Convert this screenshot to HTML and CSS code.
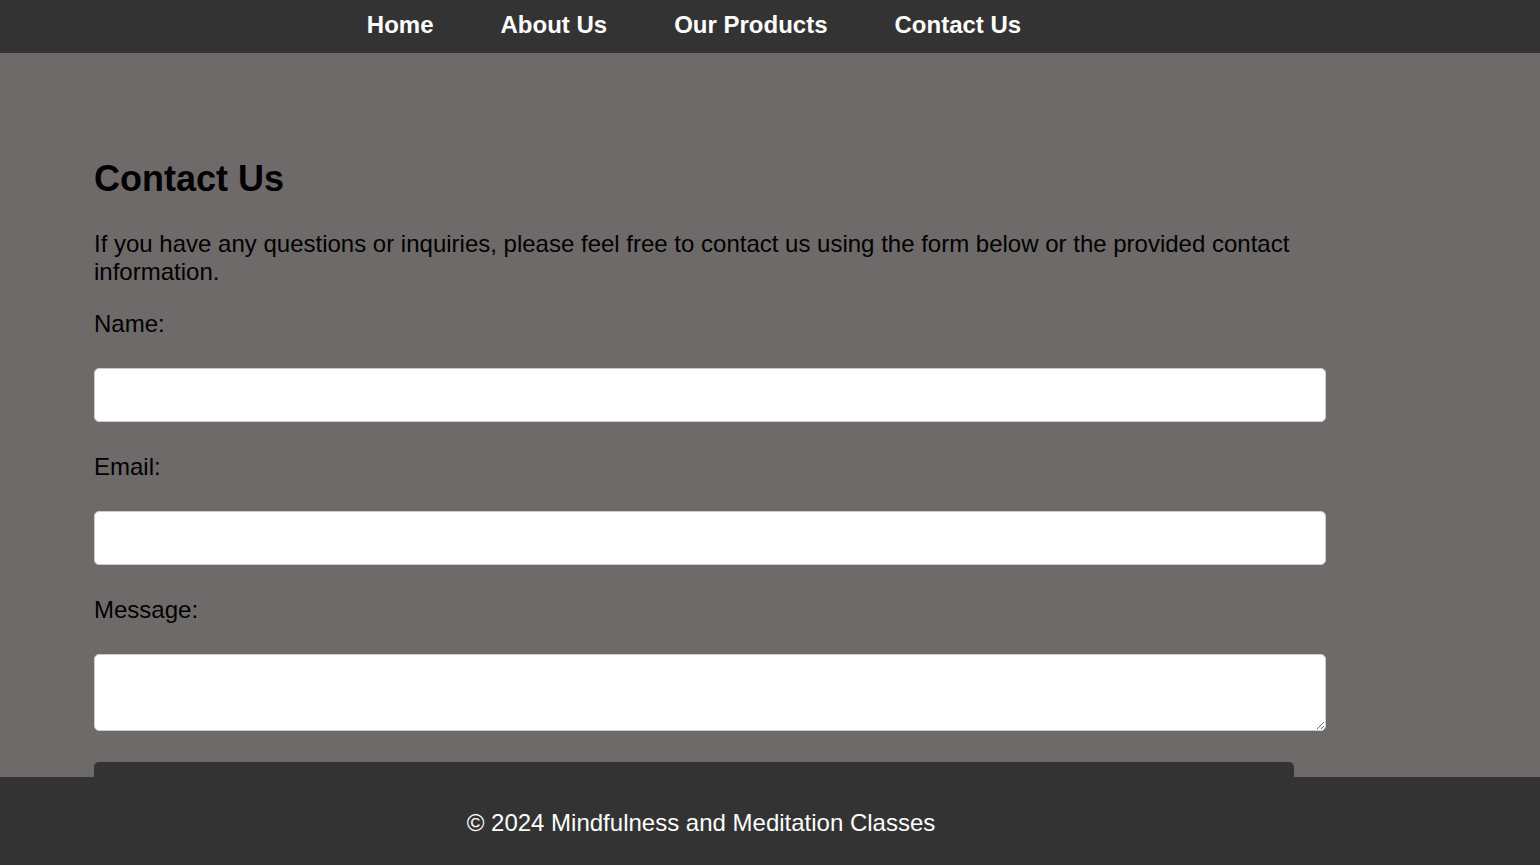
FILE: index.html
```html
<!DOCTYPE html>
<html lang="en">
<head>
<meta charset="utf-8">
<title>Contact Us - Mindfulness and Meditation Classes</title>
<link rel="stylesheet" href="styles.css">
</head>
<body>
<header class="site-header">
  <nav class="nav">
    <a href="#" class="nav-link">Home</a>
    <a href="#" class="nav-link">About Us</a>
    <a href="#" class="nav-link">Our Products</a>
    <a href="#" class="nav-link">Contact Us</a>
  </nav>
</header>
<main class="main">
  <section class="contact">
    <h2 class="title">Contact Us</h2>
    <p class="intro">If you have any questions or inquiries, please feel free to contact us using the form below or the provided contact information.</p>
    <form class="form">
      <label class="label" for="name">Name:</label>
      <input class="field" type="text" id="name" name="name">
      <label class="label" for="email">Email:</label>
      <input class="field" type="email" id="email" name="email">
      <label class="label" for="message">Message:</label>
      <textarea class="field area" id="message" name="message"></textarea>
      <button class="submit" type="submit">Submit</button>
    </form>
  </section>
</main>
<footer class="site-footer">
  <p class="footer-text">© 2024 Mindfulness and Meditation Classes</p>
</footer>
</body>
</html>
```
FILE: styles.css
```css
html, body {
  margin: 0;
  padding: 0;
}
body {
  font-family: "Liberation Sans", Arial, sans-serif;
  background: #6e6a69;
  color: #000;
}
.site-header {
  background: #333;
}
.nav {
  display: flex;
  justify-content: center;
  gap: 67px;
  padding: 11px 152px 14px 0;
}
.nav-link {
  color: #fff;
  text-decoration: none;
  font-weight: bold;
  font-size: 24px;
  line-height: 28px;
}
.main {
  padding: 105px 0 140px 94px;
}
.contact {
  width: 1200px;
}
.title {
  margin: 0 0 30px;
  font-size: 36px;
  line-height: 42px;
  font-weight: bold;
}
.intro {
  margin: 0 0 24px;
  font-size: 24px;
  line-height: 28px;
}
.form {
  display: flex;
  flex-direction: column;
  align-items: flex-start;
}
.label {
  display: block;
  font-size: 24px;
  line-height: 28px;
  margin-bottom: 30px;
}
.field {
  display: block;
  box-sizing: content-box;
  padding: 0 15px;
  width: 1200px;
  height: 52px;
  border: 1px solid #ccc;
  border-radius: 5px;
  background: #fff;
  font-family: "Liberation Sans", Arial, sans-serif;
  font-size: 20px;
  margin: 0 0 31px;
}
.area {
  height: 75px;
  resize: vertical;
}
.submit {
  width: 1200px;
  height: 54px;
  border: none;
  border-radius: 5px;
  background: #333;
  color: #fff;
  font-size: 24px;
  font-family: "Liberation Sans", Arial, sans-serif;
}
.site-footer {
  position: fixed;
  left: 0;
  right: 0;
  bottom: 0;
  height: 88px;
  background: #333;
  color: #fff;
  text-align: center;
  padding-right: 138px;
}
.footer-text {
  margin: 0;
  padding-top: 32px;
  font-size: 24px;
  line-height: 28px;
}
```
